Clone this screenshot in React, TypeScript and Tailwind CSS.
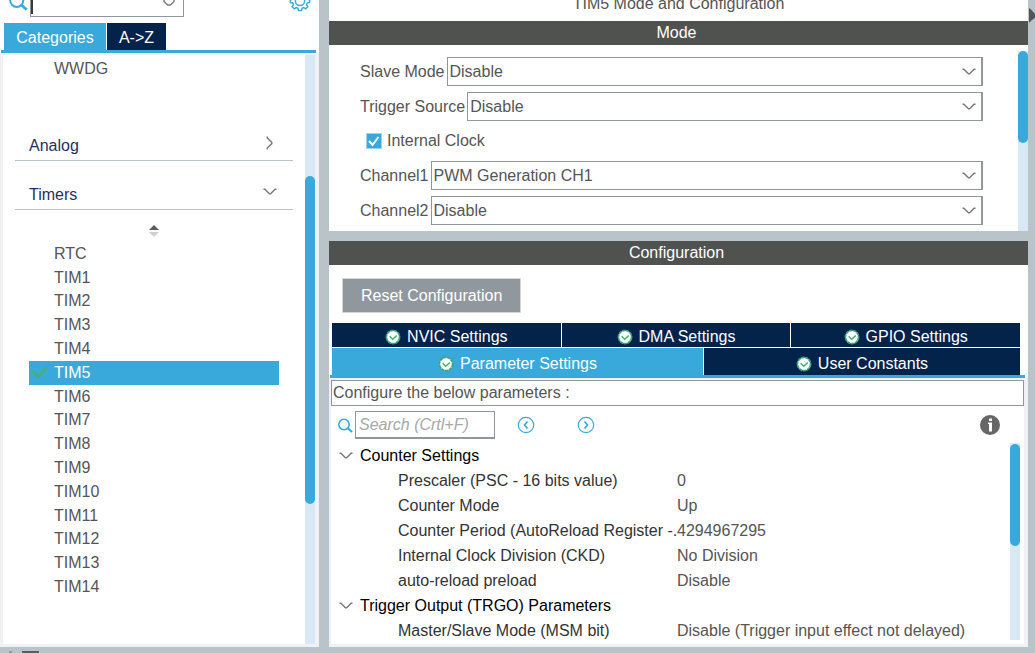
import React, { useState } from "react";
import { clsx } from "clsx";

/** --- Data --- **/
const timers = ["RTC", ...Array.from({ length: 14 }, (_, i) => `TIM${i + 1}`)];

const parameterGroups = [
  {
    title: "Counter Settings",
    rows: [
      ["Prescaler (PSC - 16 bits value)", "0"],
      ["Counter Mode", "Up"],
      ["Counter Period (AutoReload Register -.", "4294967295"],
      ["Internal Clock Division (CKD)", "No Division"],
      ["auto-reload preload", "Disable"],
    ],
  },
  {
    title: "Trigger Output (TRGO) Parameters",
    rows: [["Master/Slave Mode (MSM bit)", "Disable (Trigger input effect not delayed)"]],
  },
];

/** --- Icons --- **/
const Chevron: React.FC<{ className?: string }> = ({ className }) => (
  <svg viewBox="0 0 14 8" className={clsx("h-2 w-3.5", className)} fill="none" stroke="#7a7a7a" strokeWidth="1.4">
    <path d="M.5 1.2h1.4L6.400 5.800h1.200L12.100 1.200H13.500" />
  </svg>
);

const SearchIcon: React.FC<{ className?: string }> = ({ className }) => (
  <svg viewBox="0 0 16 16" className={className} fill="none" stroke="#39a9dc">
    <circle cx="7" cy="7.500" r="5.200" strokeWidth="1.600" />
    <path d="M10.500 11l4.500 4" strokeWidth="2.200" />
  </svg>
);

const GearIcon = () => (
  <svg viewBox="0 0 24 24" className="h-5.5 w-5.5 shrink-0" fill="none" stroke="#39a9dc" strokeWidth="1.6">
    <circle cx="12" cy="12" r="5" />
    <path d="M10.3 1.8h3.4l.5 2.6 1.8.8 2.2-1.5 2.4 2.4-1.5 2.2.8 1.8 2.6.5v3l-2.6.6-.8 1.8 1.5 2.2-2.4 2.4-2.2-1.5-1.8.8-.5 2.6h-3.4l-.5-2.6-1.8-.8-2.2 1.5-2.4-2.4 1.5-2.2-.8-1.8-2.6-.5v-3l2.6-.6.8-1.8-1.5-2.2 2.4-2.4 2.2 1.5 1.8-.8z" />
  </svg>
);

const StatusIcon = () => (
  <svg viewBox="0 0 16 16" className="size-4 shrink-0">
    <circle cx="8" cy="8" r="6.6" fill="#fff" stroke="#3da56f" strokeWidth="1.7" strokeDasharray="3.4 .6" />
    <path d="M4.6 7.200l3 3 4.200-3.600" fill="none" stroke="#4bb07c" strokeWidth="1.5" />
  </svg>
);

const StepIcon: React.FC<{ d: string }> = ({ d }) => (
  <svg viewBox="0 0 18 18" className="size-[18px]" fill="none" stroke="#39a9dc">
    <circle cx="9" cy="9" r="7.7" strokeWidth="1.2" />
    <path d={d} strokeWidth="1.7" />
  </svg>
);

/** --- Building blocks --- **/
const TitleBar: React.FC<{ children: React.ReactNode }> = ({ children }) => (
  <h2 className="h-6 shrink-0 bg-[#50524f] pr-1 text-center leading-6 text-white">{children}</h2>
);

const ScrollTrack: React.FC<{ className?: string; thumb: string }> = ({ className, thumb }) => (
  <div className={clsx("w-2.5 shrink-0 bg-[#d9e8f5]", className)}>
    <div className={clsx("rounded-full bg-[#39a9dc]", thumb)} />
  </div>
);

const SelectRow: React.FC<{ id: string; label: string; options: string[] }> = ({ id, label, options }) => (
  <div className="flex h-[29px] items-center gap-0.5">
    <label htmlFor={id} className="shrink-0">{label}</label>
    <div className="relative h-full flex-1">
      <select
        id={id}
        className="h-full w-full appearance-none border border-r-2 border-[#90989e] bg-white px-0.5 outline-none"
      >
        {options.map(o => <option key={o}>{o}</option>)}
      </select>
      <Chevron className="pointer-events-none absolute top-[11px] right-[7px]" />
    </div>
  </div>
);

const Tab: React.FC<{ label: string; active?: boolean }> = ({ label, active }) => (
  <button
    type="button"
    className={clsx(
      "flex h-full items-center justify-center gap-1.5 pt-1 leading-5 text-white",
      active ? "bg-[#39a9dc]" : "bg-[#03234b]"
    )}
  >
    <StatusIcon />
    {label}
  </button>
);

/** --- Left: categories --- **/
const CategoryPanel = () => {
  const [selected, setSelected] = useState("TIM5");

  return (
    <aside className="flex w-[319px] shrink-0 flex-col bg-white">
      <div className="flex h-[17px] shrink-0 items-end justify-between overflow-hidden pr-2 pl-2">
        <div className="flex items-end">
          <SearchIcon className="mb-1.5 mr-0.5 size-5 shrink-0" />
          <div className="relative">
            <input
              aria-label="Filter"
              className="block h-7 w-[154px] border border-[#90989e] bg-white px-1 outline-none"
            />
            <div className="absolute bottom-[3px] left-px h-5 w-0.5 bg-[#3a3a3a]" />
            <svg viewBox="0 0 14 14" className="absolute right-2 bottom-2.5 size-3.5" fill="none" stroke="#7a7a7a" strokeWidth="1.4">
              <path d="M2 5v3.500l3.500 3.500h3L12 8.500V5" />
            </svg>
          </div>
        </div>
        <div className="mb-[5px]"><GearIcon /></div>
      </div>

      <div className="mt-1.5 ml-1 flex h-[27px] shrink-0 gap-px text-white">
        <button type="button" className="w-[102px] bg-[#39a9dc] pt-0.5">Categories</button>
        <button type="button" className="w-[59px] bg-[#03234b] pt-0.5">A-&gt;Z</button>
      </div>
      <div className="mr-[3px] ml-px h-[3px] shrink-0 bg-[#39a9dc]" />

      <div className="flex min-h-0 flex-1 bg-[#f0f1f4] pt-0.5 pr-1 pb-[3px] pl-[3px]">
        <div className="flex flex-1 flex-col bg-white pr-3 pl-3">
          <div className="h-[74px] shrink-0 pl-[39px] leading-[27px]">WWDG</div>
          <button type="button" className="flex h-8 shrink-0 items-end justify-between border-b border-[#b9c4ca] pr-4 pb-0.5 pl-3.5 text-[#1f2f63]">
            Analog
            <Chevron className="mb-[11px] -rotate-90" />
          </button>
          <button type="button" className="flex h-[49px] shrink-0 items-end justify-between border-b border-[#b9c4ca] pr-4 pb-0.5 pl-3.5 text-[#1f2f63]">
            Timers
            <Chevron className="mb-[11px]" />
          </button>
          <svg viewBox="0 0 12 14" className="mt-[14px] mb-1 h-3.5 w-3 shrink-0 self-center">
            <path d="M6 1l5 5H1z" fill="#5c5c5c" />
            <path d="M6 13l5-5H1z" fill="#cfcfcf" />
          </svg>
          <ul className="mb-[45px] flex min-h-0 flex-1 flex-col pr-3.5 pl-3.5 leading-5">
            {timers.map(t => (
              <li key={t} className="min-h-0 flex-1">
                <button
                  type="button"
                  onClick={() => setSelected(t)}
                  className={clsx(
                    "flex h-full w-full items-center pl-[3px] text-left",
                    t === selected && "bg-[#39a9dc] text-white"
                  )}
                >
                  <span className="w-[22px]">
                    {t === "TIM5" && (
                      <svg viewBox="0 0 16 13" className="h-[13px] w-4" fill="none" stroke="#46b07c" strokeWidth="3">
                        <path d="M1.500 5.500l4.500 5 8.500-8.500" strokeLinecap="round" />
                      </svg>
                    )}
                  </span>
                  {t}
                </button>
              </li>
            ))}
          </ul>
        </div>
        <ScrollTrack className="flex flex-col" thumb="mt-[121px] h-[328px]" />
      </div>
    </aside>
  );
};

/** --- Right top: mode --- **/
const ModePanel = () => (
  <section className="shrink-0 bg-white">
    <div className="flex h-[21px] items-end justify-center overflow-hidden pb-[5px] leading-6">
      <h1>TIM5 Mode and Configuration</h1>
    </div>
    <TitleBar>Mode</TitleBar>
    <div className="flex">
      <form className="flex flex-1 flex-col gap-1.5 pt-3 pr-[35px] pb-1.5 pl-[31px]">
        <SelectRow id="slave" label="Slave Mode" options={["Disable", "Reset Mode", "Gated Mode"]} />
        <SelectRow id="trigger" label="Trigger Source" options={["Disable", "ITR0", "ITR1"]} />
        <label className="flex h-7 items-center gap-[5px] pl-1.5">
          <span className="relative size-4">
            <input
              type="checkbox"
              defaultChecked
              className="peer block size-4 appearance-none border border-[#9ed4ee] bg-white checked:bg-[#39a9dc]"
            />
            <svg viewBox="0 0 16 16" className="pointer-events-none absolute inset-0 hidden size-4 peer-checked:block" fill="none" stroke="#fff" strokeWidth="2">
              <path d="M3 8l3.500 4L12.500 4" />
            </svg>
          </span>
          Internal Clock
        </label>
        <SelectRow id="ch1" label="Channel1" options={["PWM Generation CH1", "Disable"]} />
        <SelectRow id="ch2" label="Channel2" options={["Disable", "PWM Generation CH2"]} />
      </form>
      <ScrollTrack className="mt-1.5" thumb="h-[92px]" />
    </div>
  </section>
);

/** --- Right bottom: configuration --- **/
const ConfigurationPanel = () => (
  <section className="flex min-h-0 flex-1 flex-col bg-white">
    <TitleBar>Configuration</TitleBar>
    <div className="px-[13px] pt-[13px] pb-2.5">
      <button type="button" className="h-[35px] border border-[#d5d9dc] bg-[#90989e] px-[18px] text-white">
        Reset Configuration
      </button>
    </div>

    <div className="grid h-6 shrink-0 grid-cols-3 gap-px pr-2 pl-[3px]">
      <Tab label="NVIC Settings" />
      <Tab label="DMA Settings" />
      <Tab label="GPIO Settings" />
    </div>
    <div className="mt-px grid h-[27px] shrink-0 grid-cols-[27fr_23fr] gap-px pr-2 pl-[3px]">
      <Tab label="Parameter Settings" active />
      <Tab label="User Constants" />
    </div>
    <div className="mr-[3px] ml-px h-[3px] shrink-0 bg-[#39a9dc]" />

    <div className="flex min-h-0 flex-1 flex-col bg-[#f0f1f4] pt-0.5 pr-1 pb-[3px] pl-0.5">
      <div className="h-[26px] shrink-0 border border-[#90989e] bg-white pl-px leading-6">
        Configure the below parameters :
      </div>
      <div className="flex min-h-0 flex-1 flex-col overflow-hidden bg-white">
        <div className="flex shrink-0 items-center pt-[5px] pr-6 pl-1.5">
          <SearchIcon className="mr-0.5 size-4" />
          <input
            aria-label="Search parameters"
            placeholder="Search (Crtl+F)"
            className="h-7 w-[140px] border border-b-2 border-[#90989e] px-[3px] outline-none placeholder:text-[#a8a8a8] placeholder:italic"
          />
          <button type="button" aria-label="Previous" className="ml-[22px]">
            <StepIcon d="M10.500 5.500L7.500 9l3 3.500" />
          </button>
          <button type="button" aria-label="Next" className="ml-[42px]">
            <StepIcon d="M7.500 5.500L10.500 9l-3 3.500" />
          </button>
          <button type="button" aria-label="Info" className="ml-auto">
            <svg viewBox="0 0 20 20" className="size-5">
              <circle cx="10" cy="10" r="10" fill="#666" />
              <path d="M9 3.500h3v2.500H9zM8 7.500h4v9H9V9H8z" fill="#fff" />
            </svg>
          </button>
        </div>
        <div className="flex min-h-0 flex-1 pt-1 pr-1">
          <table className="w-full flex-1 table-fixed self-start text-left leading-[25px]">
            <colgroup>
              <col className="w-[346px]" />
              <col />
            </colgroup>
            {parameterGroups.map(group => (
              <tbody key={group.title}>
                <tr>
                  <th colSpan={2} className="p-0 pl-2 font-normal text-black">
                    <button type="button" className="flex h-[25px] items-center gap-[7px]">
                      <Chevron />
                      {group.title}
                    </button>
                  </th>
                </tr>
                {group.rows.map(([name, value]) => (
                  <tr key={name}>
                    <td className="p-0 pl-[67px] whitespace-nowrap text-[#333]">{name}</td>
                    <td className="p-0 whitespace-nowrap">{value}</td>
                  </tr>
                ))}
              </tbody>
            ))}
          </table>
          <ScrollTrack className="mb-1" thumb="mt-px h-[102px]" />
        </div>
      </div>
    </div>
  </section>
);

/** --- App --- **/
export default function App() {
  return (
    <div className="flex h-screen flex-col overflow-hidden bg-[#b9c4ca] font-['Liberation_Sans',Arial,sans-serif] text-base text-[#555]">
      <div className="flex min-h-0 flex-1">
        <CategoryPanel />
        <div className="ml-2.5 flex min-w-0 flex-1 flex-col gap-2.5">
          <ModePanel />
          <ConfigurationPanel />
        </div>
        <div className="w-[7px] shrink-0 pt-[7px]">
          <svg viewBox="0 0 7 17" className="h-[17px] w-[7px]">
            <path d="M1 1c2 1 3.500 3 6 6v4c-2.500 1-4 3-6 5z" fill="#555" />
          </svg>
        </div>
      </div>
      <div className="flex h-1.5 shrink-0 items-end gap-2.5 pl-[9px]">
        <div className="h-0.5 w-[3px] bg-[#979da1]" />
        <div className="h-0.5 w-[17px] bg-[#5a5d60]" />
      </div>
    </div>
  );
}
